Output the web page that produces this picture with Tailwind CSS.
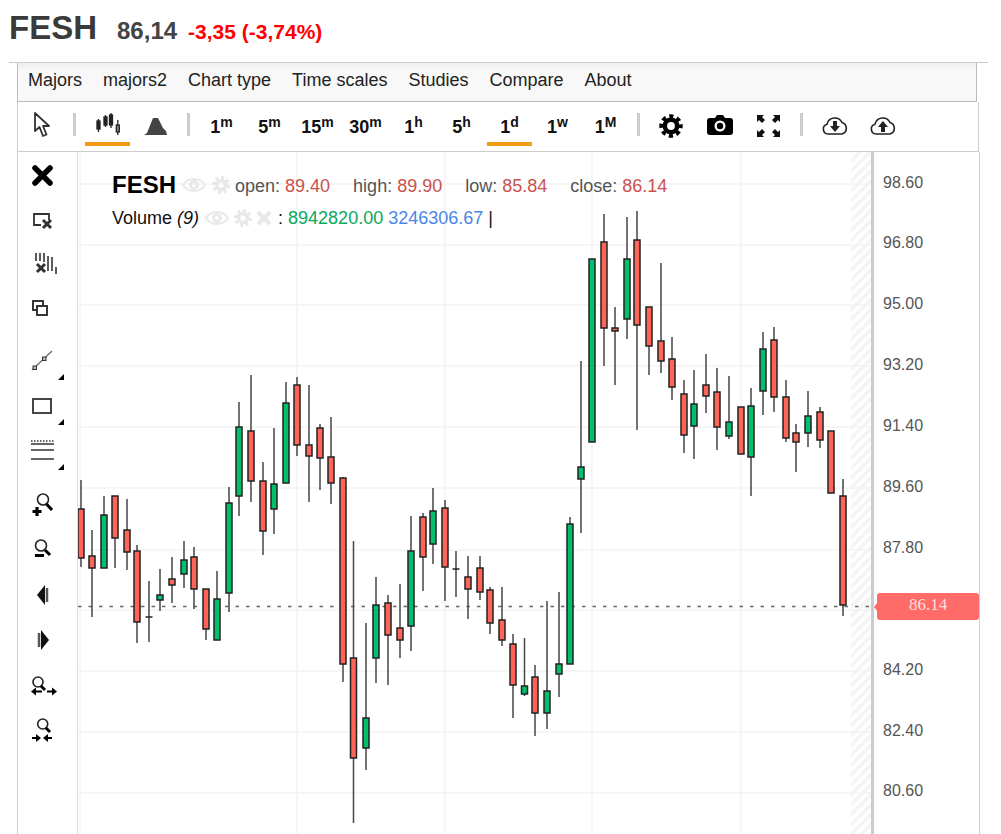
<!DOCTYPE html>
<html lang="en">
<head>
    <meta charset="UTF-8">
    <title>FESH</title>
    <script src="https://cdn.jsdelivr.net/npm/@tailwindcss/browser@4"></script>
</head>
<body class="bg-white h-[834px] overflow-hidden [font-family:'Liberation_Sans',sans-serif]">
    <!-- Quote header -->
    <div class="flex items-baseline h-[62px] pl-[9px] pt-[8px] font-bold">
        <span class="text-[33px] leading-[40px] text-[#3a3a3a]">FESH</span>
        <span class="ml-[20px] text-[24px] text-[#444]">86,14</span>
        <span class="ml-[11px] text-[21px] text-[#f00]">-3,35 (-3,74%)</span>
    </div>
    <div class="ml-[9px] w-[979px] h-px bg-[#ccc]"></div>

    <!-- Menu bar -->
    <div class="ml-[17px] w-[960px] h-[39px] flex items-center gap-[21px] pl-[10px] pb-[3px] text-[18px] text-[#222] bg-[linear-gradient(#eee,#f8f8f8_20%)] border-x border-b border-[#bbb]">
        <span>Majors</span><span>majors2</span><span>Chart type</span><span>Time scales</span><span>Studies</span><span>Compare</span><span>About</span>
    </div>

    <!-- Toolbar -->
    <div class="ml-[17px] w-[962px] h-[50px] flex pl-[1px] border-x border-b border-[#ccc] text-[18px] font-bold text-[#111]">
        <div class="w-[45px] h-[45px] flex items-center justify-center">
            <svg width="24" height="28" viewBox="0 0 24 28"><path d="M5 2v18l4.500-4 3.500 9 3.500-1.500-3.500-8.500 6 0z" fill="#fff" stroke="#333" stroke-width="1.800" stroke-linejoin="round"/></svg>
        </div>
        <div class="w-[3px] h-[23px] mt-[11px] mx-[9px] bg-[#ccc]"></div>
        <div class="w-[45px] h-[44px] pt-[10px] flex justify-center border-b-4 border-[#f39c12]">
            <svg width="26" height="24" viewBox="0 0 26 24" stroke="#222" stroke-width="1.300" fill="#222"><path d="M3.500 7v13M10.500 3v12M16 1v15M22.800 8v15"/><rect x="2" y="9" width="3" height="8"/><rect x="9" y="5" width="3" height="8"/><rect x="14.500" y="3" width="3" height="10"/><rect x="21.300" y="13" width="3" height="7" fill="#888"/></svg>
        </div>
        <div class="w-[45px] h-[47px] ml-[3px] flex items-center justify-center">
            <svg width="24" height="22" viewBox="0 0 24 22"><path d="M0 20 3 18 9 3h5l5 10 3 3 1 4z" fill="#444"/></svg>
        </div>
        <div class="w-[3px] h-[23px] mt-[11px] mx-[9px] bg-[#ccc]"></div>
        <div class="flex gap-[3px]">
            <div class="w-[45px] h-[44px] pt-[12px] text-center">1<sup class="text-[14px] -top-[6px]">m</sup></div>
            <div class="w-[45px] h-[44px] pt-[12px] text-center">5<sup class="text-[14px] -top-[6px]">m</sup></div>
            <div class="w-[45px] h-[44px] pt-[12px] text-center">15<sup class="text-[14px] -top-[6px]">m</sup></div>
            <div class="w-[45px] h-[44px] pt-[12px] text-center">30<sup class="text-[14px] -top-[6px]">m</sup></div>
            <div class="w-[45px] h-[44px] pt-[12px] text-center">1<sup class="text-[14px] -top-[6px]">h</sup></div>
            <div class="w-[45px] h-[44px] pt-[12px] text-center">5<sup class="text-[14px] -top-[6px]">h</sup></div>
            <div class="w-[45px] h-[44px] pt-[12px] text-center border-b-4 border-[#f39c12]">1<sup class="text-[14px] -top-[6px]">d</sup></div>
            <div class="w-[45px] h-[44px] pt-[12px] text-center">1<sup class="text-[14px] -top-[6px]">w</sup></div>
            <div class="w-[45px] h-[44px] pt-[12px] text-center">1<sup class="text-[14px] -top-[6px]">M</sup></div>
        </div>
        <div class="w-[3px] h-[23px] mt-[11px] mx-[9px] bg-[#ccc]"></div>
        <div class="w-[45px] h-[47px] -ml-[1px] flex items-center justify-center">
            <svg width="24" height="24" viewBox="0 0 24 24" fill="none" stroke="#000"><circle cx="12" cy="12" r="6.200" stroke-width="4.600"/><circle cx="12" cy="12" r="9.800" stroke-width="3.800" stroke-dasharray="4.200 3.500" stroke-dashoffset="2.100"/></svg>
        </div>
        <div class="w-[45px] h-[45px] ml-[4px] flex items-center justify-center">
            <svg width="26" height="20" viewBox="0 0 26 20"><path d="M3 3h5l2-3h6l2 3h5a3 3 0 0 1 3 3v11a3 3 0 0 1-3 3H3a3 3 0 0 1-3-3V6a3 3 0 0 1 3-3z" fill="#000"/><circle cx="13" cy="11" r="5.500" fill="#fff"/><circle cx="13" cy="11" r="3.200" fill="#000"/></svg>
        </div>
        <div class="w-[45px] h-[47px] ml-[4px] flex items-center justify-center">
            <svg width="23" height="22" viewBox="0 0 23 22" fill="#111"><path d="M0 0h7L5 2l3 3-3 3-3-3-2 2zM23 0v7l-2-2-3 3-3-3 3-3-2-2zM0 22v-7l2 2 3-3 3 3-3 3 2 2zM23 22h-7l2-2-3-3 3-3 3 3 2-2z"/></svg>
        </div>
        <div class="w-[3px] h-[23px] mt-[11px] ml-[9px] mr-[9px] bg-[#ccc]"></div>
        <div class="w-[45px] h-[45px] flex items-center justify-center">
            <svg width="26" height="20" viewBox="0 0 26 20"><path d="M7 19H6a5 5 0 0 1-1-9.800A8 8 0 0 1 20 7.500 6 6 0 0 1 20 19z" fill="#fff" stroke="#222" stroke-width="1.600"/><path d="M11 6h4v5h3l-5 6-5-6h3z" fill="#222"/></svg>
        </div>
        <div class="w-[45px] h-[45px] ml-[3px] flex items-center justify-center">
            <svg width="26" height="20" viewBox="0 0 26 20"><path d="M7 19H6a5 5 0 0 1-1-9.800A8 8 0 0 1 20 7.500 6 6 0 0 1 20 19z" fill="#fff" stroke="#222" stroke-width="1.600"/><path d="M11 17h4v-5h3l-5-6-5 6h3z" fill="#222"/></svg>
        </div>
    </div>

    <!-- Chart frame -->
    <div class="ml-[17px] w-[963px] h-[682px] flex border-x border-[#ccc]">
        <!-- Drawing tools -->
        <div class="w-[60px] shrink-0 border-r border-[#ddd] pl-[9px] pt-[2px]">
            <div class="h-[44px] flex items-center"><svg width="30" height="30" viewBox="0 0 30 30"><path d="M8 7l15 15M23 7 8 22" stroke="#000" stroke-width="5.500" stroke-linecap="round"/></svg></div>
            <div class="h-[44px] flex items-center"><svg width="30" height="30" viewBox="0 0 30 30" fill="none" stroke="#333"><path d="M14 20H7V9h15v6" stroke-width="1.800"/><path d="M16 15l8 8M24 15l-8 8" stroke-width="3"/></svg></div>
            <div class="h-[44px] flex items-center"><svg width="30" height="30" viewBox="0 0 30 30" fill="none" stroke="#333"><path d="M9 4v8M13 4v8M17 4v9M21 7v15M25 8v14M29 18v7" stroke-width="1.600"/><path d="M10 15l8 8M18 15l-8 8" stroke-width="3"/></svg></div>
            <div class="h-[44px] flex items-center"><svg width="30" height="30" viewBox="0 0 30 30" fill="#fff" stroke="#222" stroke-width="1.800"><rect x="6" y="8" width="10" height="9"/><rect x="10" y="13" width="10" height="9"/></svg></div>

            <div class="h-[44px] mt-[10px] flex items-center relative"><svg width="30" height="30" viewBox="0 0 30 30" fill="none" stroke="#333"><path d="M5 23 25 4" stroke="#666" stroke-width="1.200"/><rect x="6" y="19" width="3.500" height="3.500" fill="#bbb"/><rect x="15.500" y="10" width="3.500" height="3.500" fill="#bbb"/></svg><span class="absolute left-[31px] top-[34px] size-0 border-l-[6px] border-b-[6px] border-l-transparent border-b-black"></span></div>
            <div class="h-[44px] flex items-center relative"><svg width="30" height="30" viewBox="0 0 30 30" fill="none" stroke="#333" stroke-width="1.800"><rect x="6" y="8" width="18" height="14"/></svg><span class="absolute left-[31px] top-[35px] size-0 border-l-[6px] border-b-[6px] border-l-transparent border-b-black"></span></div>
            <div class="h-[44px] flex items-center relative"><svg width="30" height="30" viewBox="0 0 30 30" fill="none" stroke="#333" stroke-width="1.500"><path d="M4 6h23" stroke-dasharray="1.500 1.500"/><path d="M4 9h23M4 15h23M4 24h23"/></svg><span class="absolute left-[31px] top-[36px] size-0 border-l-[6px] border-b-[6px] border-l-transparent border-b-black"></span></div>

            <div class="h-[45px] mt-[10px] flex items-center"><svg width="30" height="30" viewBox="0 0 30 30" fill="none"><circle cx="16" cy="9.500" r="5.500" fill="#fff" stroke="#222" stroke-width="1.600"/><path d="M19.500 14l5.500 6" stroke="#000" stroke-width="3"/><path d="M10 17v9M5.500 21.500h9" stroke="#000" stroke-width="3.200"/></svg></div>
            <div class="h-[45px] flex items-center"><svg width="30" height="30" viewBox="0 0 30 30" fill="none"><circle cx="14" cy="10.500" r="5.500" stroke="#222" stroke-width="1.600"/><path d="M18 15l5 5" stroke="#000" stroke-width="3"/><path d="M8 20.500h9" stroke="#000" stroke-width="3"/></svg></div>
            <div class="h-[45px] flex items-center"><svg width="30" height="30" viewBox="0 0 30 30"><path d="M10 15l8-10v20z" fill="#111"/><path d="M20 8v14" stroke="#555" stroke-width="2.500"/></svg></div>
            <div class="h-[45px] flex items-center"><svg width="30" height="30" viewBox="0 0 30 30"><path d="M22 15l-8-10v20z" fill="#111"/><path d="M12 8v14" stroke="#555" stroke-width="2.500"/></svg></div>
            <div class="h-[45px] flex items-center"><svg width="30" height="30" viewBox="0 0 30 30" fill="none"><circle cx="11" cy="12" r="5" stroke="#222" stroke-width="1.600"/><path d="M14 16l4 4" stroke="#000" stroke-width="3"/><path d="M8 21.500h7M20 21.500h7" stroke="#000" stroke-width="1.800"/><path d="M4 21.500l5-4v8zM30 21.500l-5-4v8z" fill="#000"/></svg></div>
            <div class="h-[45px] flex items-center"><svg width="30" height="30" viewBox="0 0 30 30" fill="none"><circle cx="15.700" cy="9" r="5" stroke="#222" stroke-width="1.600"/><path d="M19 13l4 4" stroke="#000" stroke-width="3"/><path d="M5 23h6M19 23h6" stroke="#000" stroke-width="1.800"/><path d="M14 23l-5-4v8zM16 23l5-4v8z" fill="#000"/></svg></div>
        </div>

        <!-- Candles -->
        <div class="relative flex-1 overflow-hidden">
            <svg id="chart" class="block" width="793" height="682" viewBox="78 152 793 682"></svg>
            <div class="absolute left-[34px] top-[18px] text-[18px] text-[#555] whitespace-nowrap">
                <div class="flex items-center h-[30px]">
                    <b class="text-[24px] text-black">FESH</b>
                    <svg class="ml-[6px]" width="24" height="16" viewBox="0 0 24 16" fill="none" stroke="#e8e8e8"><path d="M1 8c5-8 17-8 22 0-5 8-17 8-22 0z" stroke-width="2"/><circle cx="12" cy="8" r="3.500" stroke-width="3"/></svg>
                    <svg class="ml-[6px]" width="18" height="18" viewBox="0 0 24 24" fill="none" stroke="#e8e8e8"><circle cx="12" cy="12" r="6" stroke-width="5"/><circle cx="12" cy="12" r="10" stroke-width="4" stroke-dasharray="4.200 3.600"/></svg>
                    <span class="ml-[5px] mt-[3px]">open: <span class="text-[#c9524e]">89.40</span></span>
                    <span class="ml-[23px] mt-[3px]">high: <span class="text-[#c9524e]">89.90</span></span>
                    <span class="ml-[23px] mt-[3px]">low: <span class="text-[#c9524e]">85.84</span></span>
                    <span class="ml-[23px] mt-[3px]">close: <span class="text-[#c9524e]">86.14</span></span>
                </div>
                <div class="flex items-center h-[30px] mt-[3px] text-[#111]">
                    <span>Volume <i>(9)</i></span>
                    <svg class="ml-[6px]" width="24" height="16" viewBox="0 0 24 16" fill="none" stroke="#e8e8e8"><path d="M1 8c5-8 17-8 22 0-5 8-17 8-22 0z" stroke-width="2"/><circle cx="12" cy="8" r="3.500" stroke-width="3"/></svg>
                    <svg class="ml-[5px]" width="18" height="18" viewBox="0 0 24 24" fill="none" stroke="#e8e8e8"><circle cx="12" cy="12" r="6" stroke-width="5"/><circle cx="12" cy="12" r="10" stroke-width="4" stroke-dasharray="4.200 3.600"/></svg>
                    <svg class="ml-[4px]" width="16" height="16" viewBox="0 0 16 16"><path d="M2 2l12 12M14 2 2 14" stroke="#e8e8e8" stroke-width="4"/></svg>
                    <span class="ml-[6px] whitespace-pre">: <span class="text-[#0aa85a]">8942820.00</span> <span class="text-[#4a86e8]">3246306.67</span> |</span>
                </div>
            </div>
        </div>

        <!-- Price axis -->
        <div class="relative w-[108px] shrink-0 border-l-[3px] border-[#ccc] pl-[9px] pt-[0.500px] text-[16px] text-[#555]">
            <div class="h-[60.900px] leading-[60.900px]">98.60</div>
            <div class="h-[60.900px] leading-[60.900px]">96.80</div>
            <div class="h-[60.900px] leading-[60.900px]">95.00</div>
            <div class="h-[60.900px] leading-[60.900px]">93.20</div>
            <div class="h-[60.900px] leading-[60.900px]">91.40</div>
            <div class="h-[60.900px] leading-[60.900px]">89.60</div>
            <div class="h-[60.900px] leading-[60.900px]">87.80</div>
            <div class="h-[60.900px]"></div>
            <div class="h-[60.900px] leading-[60.900px]">84.20</div>
            <div class="h-[60.900px] leading-[60.900px]">82.40</div>
            <div class="h-[60.900px] leading-[60.900px]">80.60</div>
            <!-- last price tag -->
            <div class="absolute left-[3px] top-[441px] w-[102px] h-[27px] rounded-[3px] bg-[#ff6b68] text-center leading-[24px] text-[17px] text-[#ffdcdc] [font-family:'Liberation_Serif',serif]">86.14</div>
            <div class="absolute left-0 top-[450px] size-0 border-y-[5px] border-r-[4px] border-y-transparent border-r-[#ff6b68]"></div>
        </div>
    </div>

    <script>
        // x, wick top, wick bottom, body top, body bottom, up (green)?
        const candles = [
            [81,480,567,509,558,0],[92,530,617,556,568,0],[104,496,568,515,568,1],[115,496,568,496,538,0],
            [127,499,570,530,552,0],[137,545,643,551,622,0],[149,581,642,617,617,0],[160,569,611,595,600,1],
            [172,557,603,579,585,0],[184,541,588,560,574,1],[194,547,609,557,589,0],[206,589,640,589,629,0],
            [217,571,640,599,640,1],[229,487,612,503,593,1],[239,402,516,427,496,1],[251,375,502,431,481,0],
            [263,462,555,481,531,0],[274,428,534,484,509,1],[286,382,483,403,483,1],[297,377,456,385,445,0],
            [309,385,502,445,456,0],[320,424,490,428,458,0],[331,417,504,457,483,0],[343,477,682,478,664,0],
            [353.500,541,823,658,758,0],[366,623,770,718,748,1],[376,577,683,605,658,1],[388,595,685,603,635,0],
            [400,584,658,628,640,0],[411,516,651,551,626,1],[423,513,591,517,557,0],[433,488,564,511,544,1],
            [445,500,601,508,567,0],[456,551,597,569,569,0],[468,556,619,577,589,0],[480,556,600,568,592,0],
            [490,587,634,590,623,0],[502,587,646,620,640,0],[513,634,718,644,685,0],[524.500,638,696,686,694,1],
            [535,665,736,677,713,0],[547,601,729,691,713,1],[559,592,697,664,674,1],[570,517,664,524,664,1],
            [581,361,533,467,479,1],[592,259,442,259,442,1],[604,214,366,242,328,0],[615,307,385,328,331,0],
            [627,217,339,259,319,1],[637,211,430,240,325,0],[649,307,375,307,346,0],[661,263,373,341,361,0],
            [672,337,400,359,387,0],[684,380,453,394,435,0],[694,370,459,404,426,1],[706,354,413,385,396,0],
            [717,368,450,392,427,0],[729,376,439,422,436,1],[741,407,454,407,454,0],[751,388,496,406,457,1],
            [763,332,415,349,391,1],[774,327,412,340,397,0],[786,380,442,397,438,0],[796,424,472,433,442,0],
            [808,391,447,416,433,1],[820,407,448,412,440,0],[831,431,493,431,493,0],[843,479,616,496,605,0]
        ];

        let svg = '<defs><pattern id="hatch" width="7" height="7" patternUnits="userSpaceOnUse" patternTransform="rotate(45)"><rect width="3.500" height="7" fill="#f4f4f4"/></pattern></defs>';
        svg += '<rect x="851" y="152" width="20" height="682" fill="url(#hatch)"/>';

        // grid
        for (const y of [184,245,305,366,427,488,550,610,671,732,793]) {
            svg += `<line x1="78" x2="871" y1="${y}" y2="${y}" stroke="#f3f3f3" stroke-width="1.500"/>`;
        }
        for (const x of [80,297,445,592,741]) {
            svg += `<line x1="${x}" x2="${x}" y1="152" y2="834" stroke="#f3f3f3" stroke-width="1.500"/>`;
        }

        svg += '<line x1="78" x2="871" y1="606.500" y2="606.500" stroke="#666" stroke-dasharray="3.500 7" stroke-width="1.300"/>';

        for (const [x, wt, wb, bt, bb, up] of candles) {
            svg += `<line x1="${x}" x2="${x}" y1="${wt}" y2="${wb}" stroke="#444" stroke-width="1.500"/>`;
            if (bt === bb) {
                svg += `<line x1="${x - 3.500}" x2="${x + 3.500}" y1="${bt}" y2="${bt}" stroke="#222" stroke-width="1.500"/>`;
            } else {
                svg += `<rect x="${x - 3}" y="${bt}" width="6" height="${bb - bt}" fill="${up ? '#00c06c' : '#ff6458'}" stroke="#222" stroke-width="1.500"/>`;
            }
        }
        document.getElementById('chart').innerHTML = svg;
    </script>
</body>
</html>
